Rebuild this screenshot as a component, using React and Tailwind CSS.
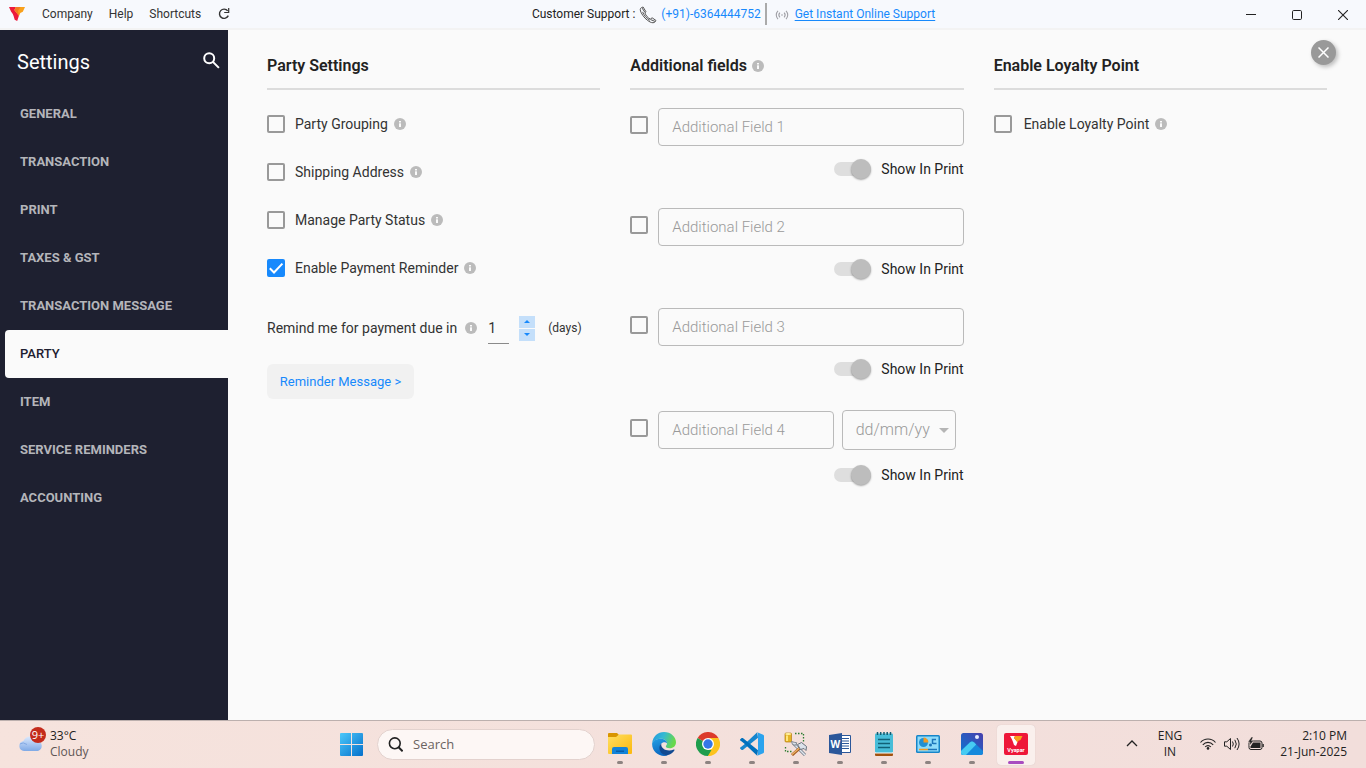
import React from "react";

const menu = ["GENERAL", "TRANSACTION", "PRINT", "TAXES & GST", "TRANSACTION MESSAGE", "PARTY", "ITEM", "SERVICE REMINDERS", "ACCOUNTING"];

const partyOptions = [
  { id: "grouping", label: "Party Grouping" },
  { id: "shipping", label: "Shipping Address" },
  { id: "status", label: "Manage Party Status" },
  { id: "reminder", label: "Enable Payment Reminder", checked: true },
];

function Info() {
  return (
    <svg viewBox="0 0 12 12" className="h-3 w-3 shrink-0" aria-hidden="true">
      <circle cx="6" cy="6" r="6" fill="#bbb" />
      <rect x="5" y="3" width="2" height="1.5" fill="#fafafa" />
      <rect x="5" y="5.3" width="2" height="3.7" fill="#fafafa" />
    </svg>
  );
}

function Check({ id, checked, label }) {
  return (
    <span className="grid shrink-0 place-items-center">
      <input
        id={id}
        type="checkbox"
        defaultChecked={checked}
        aria-label={label}
        className="peer h-[18px] w-[18px] appearance-none rounded-xs border-2 border-[#999] [grid-area:1/1] checked:border-[#1789fc] checked:bg-[#1789fc]"
      />
      <svg viewBox="0 0 18 18" className="pointer-events-none invisible h-[18px] w-[18px] [grid-area:1/1] peer-checked:visible" aria-hidden="true">
        <path d="M2.8 9.3 7 13.5 15.4 4.6" fill="none" stroke="#fff" strokeWidth="2" />
      </svg>
    </span>
  );
}

function ColumnHeader({ children, info }) {
  return (
    <div className="flex h-[60px] items-center gap-[5px] border-b-2 border-[#dcdcdc] pt-[14px]">
      <h2 className="text-base font-semibold text-[#222]">{children}</h2>
      {info && <Info />}
    </div>
  );
}

function ShowInPrint() {
  return (
    <label className="flex h-5 items-center justify-end gap-[10px] text-sm text-[#222]">
      <input
        type="checkbox"
        role="switch"
        defaultChecked
        className="flex h-[14px] w-[37px] appearance-none items-center justify-end rounded-full bg-[#dedede] before:h-5 before:w-5 before:rounded-full before:bg-[#bdbdbd] before:shadow-[0_1px_2px_rgba(0,0,0,0.35)]"
      />
      Show In Print
    </label>
  );
}

function TextField({ n }) {
  return (
    <input
      type="text"
      aria-label={"Additional Field " + n + " name"}
      placeholder={"Additional Field " + n}
      className="h-[38px] w-full min-w-0 flex-1 rounded-sm border border-[#bababa] bg-transparent px-[13px] text-[15px] font-light text-[#333] placeholder:text-[#999]"
    />
  );
}

function AdditionalField({ n }) {
  return (
    <div className="mb-[29px]">
      <div className="flex items-start gap-[10px]">
        <div className="mt-2">
          <Check id={"field-" + n} label={"Enable Additional Field " + n} />
        </div>
        <TextField n={n} />
      </div>
      <div className="mt-[13px]">
        <ShowInPrint />
      </div>
    </div>
  );
}

function Logo() {
  return (
    <svg viewBox="0 0 16 14" className="mr-px h-[14px] w-4" aria-hidden="true">
      <path d="M0 0h7L5.5 3 10 8.5 8.2 14 5.7 12.7 4.6 9 3.8 7 2 4.6Z" fill="#ed1a3b" />
      <path d="M7 0h9l-2.2 4.8-2.5 1.2L10 9 5.5 3Z" fill="#f9a11b" />
      <path d="m7 0 4.5 0L9 4 10 9 5.5 3Z" fill="#f47b20" />
    </svg>
  );
}

function TitleBar() {
  return (
    <header className="flex h-[30px] shrink-0 items-center border-b-2 border-[#f3f3f3] bg-[#f7f9fd] text-xs text-[#333]">
      <nav className="flex grow-[528] basis-0 items-center gap-4 pl-[9px]">
        <Logo />
        <button>Company</button>
        <button>Help</button>
        <button>Shortcuts</button>
        <button aria-label="Refresh" className="ml-px">
          <svg viewBox="0 0 12 12" className="h-3 w-3" aria-hidden="true">
            <path d="M9.7 2.9A4.6 4.6 0 1 0 10.3 7.6" fill="none" stroke="#333" strokeWidth="1.4" />
            <path d="M10.7 0v4.5H6.2" fill="none" stroke="#333" strokeWidth="1.2" />
          </svg>
        </button>
      </nav>
      <div className="flex items-center">
        <span className="text-[#222]">Customer Support :</span>
        <svg viewBox="0 0 18 18" className="mt-[2px] ml-1 h-[18px] w-[18px]" fill="none" stroke="#555" strokeWidth="1" aria-hidden="true">
          <path d="M2.4 1.6C.8 2.4 1 4.4 2.2 6.7c2 3.9 5.1 7.4 8.9 9.3 2.1 1 3.9 1.2 5.4-.5l.4-1.1-3.8-2.6-1.8 1.3c-2.4-1.2-4.4-3.5-5.4-6.1l1-1.3L4.1 1Z" />
          <path d="m3.1 2.1 2.7 4.1M11.6 13.6l4.4 1.8M3.6 5.9c1.5 3.6 3.7 6.2 7.3 8.4" />
        </svg>
        <a href="tel:+916364444752" className="ml-1 text-[#1789fc]">(+91)-6364444752</a>
        <span className="mx-1 h-[22px] w-[2px] bg-[#aaa]" />
        <svg viewBox="0 0 14 12" className="mt-px ml-1 h-3 w-[14px]" fill="none" stroke="#a0a0a6" strokeWidth="1.1" aria-hidden="true">
          <path d="M3 1.8C.7 4.2.7 7.8 3 10.2M11 1.8c2.3 2.4 2.3 6 0 8.4M4.9 3.7c-1.3 1.4-1.3 3.2 0 4.6M9.1 3.7c1.3 1.4 1.3 3.2 0 4.6" />
          <circle cx="7" cy="6" r=".8" fill="#a0a0a6" stroke="none" />
        </svg>
        <a href="#support" className="ml-[6px] text-[#1789fc] underline underline-offset-2">Get Instant Online Support</a>
      </div>
      <div className="flex h-full grow-[435] basis-0 justify-end">
        <button aria-label="Minimize" className="grid w-[46px] place-items-center">
          <svg viewBox="0 0 10 10" className="h-[10px] w-[10px]"><path d="M0 5.5h10" stroke="#222" /></svg>
        </button>
        <button aria-label="Maximize" className="grid w-[46px] place-items-center pt-[2px]">
          <svg viewBox="0 0 10 10" className="h-[10px] w-[10px]"><rect x=".5" y=".5" width="9" height="9" rx="1.2" fill="none" stroke="#222" /></svg>
        </button>
        <button aria-label="Close window" className="grid w-[46px] place-items-center pt-[2px]">
          <svg viewBox="0 0 10 10" className="h-[10px] w-[10px]"><path d="m0 0 10 10M10 0 0 10" stroke="#222" strokeWidth="1.1" /></svg>
        </button>
      </div>
    </header>
  );
}

function Sidebar() {
  return (
    <aside className="w-[228px] shrink-0 bg-[#1e2030]">
      <div className="flex h-[60px] items-center justify-between pt-1 pr-2 pl-[17px]">
        <h1 className="text-xl text-white">Settings</h1>
        <button aria-label="Search settings">
          <svg viewBox="0 0 17 17" className="mb-1 h-[17px] w-[17px]" fill="none" stroke="#fff" strokeWidth="2" aria-hidden="true">
            <circle cx="6.2" cy="6.2" r="5" />
            <path d="m9.9 9.9 6 6" />
          </svg>
        </button>
      </div>
      <nav>
        {menu.map((item) => (
          <a
            key={item}
            href={"#" + item.toLowerCase().replaceAll(" ", "-")}
            className={
              item === "PARTY"
                ? "ml-[5px] flex h-12 items-center rounded-l-sm bg-[#fafafa] pl-[15px] text-[13px] font-medium text-[#1e2030]"
                : "flex h-12 items-center pl-5 text-[13px] font-bold text-[#b4b5ba]"
            }
          >
            {item}
          </a>
        ))}
      </nav>
    </aside>
  );
}

function PartySettings() {
  return (
    <section>
      <ColumnHeader>Party Settings</ColumnHeader>
      <div className="mt-[10px]">
        {partyOptions.map((o) => (
          <div key={o.id} className="flex h-12 items-center gap-[10px]">
            <Check id={o.id} checked={o.checked} />
            <div className="flex items-center gap-[6px]">
              <label htmlFor={o.id} className="text-sm text-[#333]">{o.label}</label>
              <Info />
            </div>
          </div>
        ))}
      </div>
      <div className="flex h-[72px] items-center">
        <label htmlFor="days" className="mr-2 text-sm text-[#333]">Remind me for payment due in</label>
        <Info />
        <input id="days" type="text" inputMode="numeric" defaultValue="1" className="ml-[11px] h-[31px] w-[21px] border-b border-[#8a8a8a] bg-transparent text-sm text-[#333]" />
        <div className="ml-[10px] flex flex-col gap-px">
          <button aria-label="Increase days" className="grid h-3 w-4 place-items-center bg-[#c4dffa]">
            <svg viewBox="0 0 6 3" className="h-[3px] w-[6px]"><path d="M0 3 3 0l3 3Z" fill="#1789fc" /></svg>
          </button>
          <button aria-label="Decrease days" className="grid h-3 w-4 place-items-center bg-[#c4dffa]">
            <svg viewBox="0 0 6 3" className="h-[3px] w-[6px]"><path d="M0 0h6L3 3Z" fill="#1789fc" /></svg>
          </button>
        </div>
        <span className="ml-[13px] text-xs text-[#333]">(days)</span>
      </div>
      <button className="h-[35px] w-[147px] rounded-md bg-[#f1f1f1] text-[13px] text-[#1789fc]">Reminder Message &gt;</button>
    </section>
  );
}

function AdditionalFields() {
  return (
    <section>
      <ColumnHeader info>Additional fields</ColumnHeader>
      <div className="pt-[18px]">
        <AdditionalField n={1} />
        <AdditionalField n={2} />
        <AdditionalField n={3} />
        <div className="flex items-start gap-[10px] pt-[2px] pr-2">
          <div className="mt-[9px]">
            <Check id="field-4" label="Enable Additional Field 4" />
          </div>
          <div className="flex min-w-0 flex-1 items-center gap-2">
            <TextField n={4} />
            <div className="grid w-[114px] items-center">
              <select aria-label="Date format" className="h-10 w-full appearance-none rounded-sm border border-[#bababa] bg-transparent pl-[13px] text-base font-light text-[#999] [grid-area:1/1]">
                <option>dd/mm/yy</option>
              </select>
              <svg viewBox="0 0 10 5" className="pointer-events-none mr-[7px] h-[5px] w-[10px] justify-self-end [grid-area:1/1]" aria-hidden="true">
                <path d="M0 0h10L5 5Z" fill="#b5b5b5" />
              </svg>
            </div>
          </div>
        </div>
        <div className="mt-[15px]">
          <ShowInPrint />
        </div>
      </div>
    </section>
  );
}

function LoyaltyPoint() {
  return (
    <section>
      <ColumnHeader>Enable Loyalty Point</ColumnHeader>
      <div className="mt-[10px] flex h-12 items-center gap-3">
        <Check id="loyalty" />
        <div className="flex items-center gap-[6px]">
          <label htmlFor="loyalty" className="text-sm text-[#333]">Enable Loyalty Point</label>
          <Info />
        </div>
      </div>
    </section>
  );
}

function ExplorerIcon() {
  return (
    <svg viewBox="0 0 24 24" className="h-6 w-6">
      <defs><linearGradient id="fo" x1="0" y1="0" x2="1" y2="1"><stop stopColor="#ffdf62" /><stop offset="1" stopColor="#fbb80d" /></linearGradient></defs>
      <path d="M0 2q0-1 1-1h8l2 2-2 4H0Z" fill="#d99500" />
      <path d="M0 5h8l3-2.500h12q1 0 1 1V21q0 1-1 1H1q-1 0-1-1Z" fill="url(#fo)" />
      <path d="M4 22v-5q0-2 2-2h12q2 0 2 2v5Z" fill="#1383d8" />
      <path d="M8 18.500h8V20H8Z" fill="#0a5da8" />
    </svg>
  );
}

function EdgeIcon() {
  return (
    <svg viewBox="0 0 24 24" className="h-6 w-6">
      <defs>
        <linearGradient id="e1" x1="0" y1="0" x2="1" y2=".3"><stop stopColor="#2197df" /><stop offset=".5" stopColor="#35b9d3" /><stop offset="1" stopColor="#68d84b" /></linearGradient>
        <linearGradient id="e2" x1="0" y1="0" x2=".3" y2="1"><stop stopColor="#23a0e4" /><stop offset="1" stopColor="#0b67c0" /></linearGradient>
      </defs>
      <path d="M.2 11C.8 4.5 5.8 0 12 0c7 0 12 5 12 10.2 0 3.7-2.8 6-6.2 6-2.7 0-4-.9-4-1.7 0-.8 1.2-1.2 1.2-3 0-2.5-2.5-4.7-6.1-4.7-4 0-7 1.7-8.7 4.2Z" fill="url(#e1)" />
      <path d="M.2 11C1.6 8.2 4.9 6.800 8.900 6.800c3.600 0 6.100 2.200 6.100 4.400-2.400-2-7-.5-7 4 0 4.300 3.600 7.900 8 8C9 26-.8 20.500.200 11Z" fill="url(#e2)" />
      <path d="M9.300 11.800C6.500 13.500 7 19 10 21.500c2 1.700 4.800 2.200 7 1.300 2.200-.9 4.200-2.500 5.500-4.600.3-.6-.2-.8-.7-.6-6.300 2.600-13.300-.6-12.500-5.800Z" fill="#124a91" />
    </svg>
  );
}

function ChromeIcon() {
  return (
    <svg viewBox="0 0 24 24" className="h-6 w-6">
      <path d="M12 12 1.600 6A12 12 0 0 1 22.400 6Z" fill="#dc3b2c" />
      <path d="M12 12 22.400 6A12 12 0 0 1 12 24Z" fill="#fcc31e" />
      <path d="M12 12v12A12 12 0 0 1 1.600 6Z" fill="#1f9d4d" />
      <path d="M12 6h10.400l-5.200 9Z" fill="#fcc31e" />
      <path d="m6.800 15 5.200 3h5.200L12 24Z" fill="#1f9d4d" />
      <path d="m17.200 15-5.200 9 2-.2 6-7Z" fill="#fcc31e" />
      <circle cx="12" cy="12" r="6" fill="#fff" />
      <circle cx="12" cy="12" r="4.700" fill="#3577e8" />
    </svg>
  );
}

function CodeIcon() {
  return (
    <svg viewBox="0 0 24 24" className="h-6 w-6">
      <path d="m17.200.2-12.700 12L1.700 14.400.3 15.500q-.6.600 0 1.200l1.400 1.200q.5.400 1.100 0L18 5.800Z" fill="#1686ce" />
      <path d="M17.200 23.800 4.500 11.800 1.700 9.600.3 8.500q-.6-.6 0-1.200l1.400-1.200q.5-.4 1.100 0L18 18.200Z" fill="#0070bd" />
      <path d="m17.200.200 6 2.600q.8.400.8 1.300v15.800q0 .9-.8 1.300l-6 2.600q.8-.6.800-1.500V1.700q0-.9-.8-1.500Z" fill="#2ba3ee" />
    </svg>
  );
}

function ToolsIcon() {
  return (
    <svg viewBox="0 0 24 24" className="h-6 w-6">
      <rect x="1" y="1" width="6.500" height="9" rx="1" fill="#e5b426" stroke="#b47b10" strokeWidth=".7" />
      <path d="M2 3.500h2V9H2Z" fill="#ffe67c" />
      <ellipse cx="4.200" cy="2" rx="3" ry="1.100" fill="#fff0a0" />
      <path d="M11 1.500h8.500V10M1.500 15v4.500H9" fill="none" stroke="#2e7d32" strokeWidth="1.300" strokeDasharray="1.500 1.500" />
      <path d="m10 12 11 11" stroke="#6f7b89" strokeWidth="3" />
      <path d="m10 12 11 11" stroke="#e0e5ec" strokeWidth="1.500" />
      <path d="m8 23 9-8" stroke="#a65d20" strokeWidth="3" />
      <path d="m8 22.500 8-7" stroke="#ecb368" strokeWidth="1.300" />
      <path d="m13.500 12.500 4-2 5 4-.5 4-2-2-3.500 1Z" fill="#dce2ea" stroke="#68717c" />
      <path d="m7.500 9.500 1 3 3 .8 1.300-2.500-2.500-.5Z" fill="#dce2ea" stroke="#68717c" strokeWidth=".8" />
    </svg>
  );
}

function WordIcon() {
  return (
    <svg viewBox="0 0 24 24" className="h-6 w-6">
      <path d="M13 3.500h9.500v17H13Z" fill="#fff" stroke="#2b579a" />
      <path d="M14 6.500h7M14 9h7M14 11.500h7M14 14h7M14 16.500h7" stroke="#2b579a" />
      <path d="M1 3 14 1v22L1 21Z" fill="#2b579a" />
      <text x="7.300" y="15.500" textAnchor="middle" fontSize="10" fontWeight="700" fontFamily="Open Sans, sans-serif" fill="#fff">W</text>
    </svg>
  );
}

function NotepadIcon() {
  return (
    <svg viewBox="0 0 24 24" className="h-6 w-6">
      <rect x="3" y="19" width="18" height="5" rx="1" fill="#a3520f" />
      <rect x="3" y="19" width="18" height="2.500" fill="#fff" />
      <rect x="3" y="1.500" width="18" height="19" rx="1" fill="#48bdd8" />
      <path d="M5.500 0v3M8.700 0v3M12 0v3M15.200 0v3M18.500 0v3" stroke="#125b70" strokeWidth="1.500" />
      <path d="M6 7.500h12M6 11.500h12M6 15.500h12" stroke="#116177" strokeWidth="1.700" />
    </svg>
  );
}

function PanelIcon() {
  return (
    <svg viewBox="0 0 24 24" className="h-6 w-6">
      <rect y="3" width="24" height="18" rx="1.500" fill="#1685c9" />
      <rect x="1.500" y="4.500" width="21" height="15" fill="#8fdcfa" />
      <circle cx="7.500" cy="10.500" r="4.500" fill="#2190d4" />
      <path d="M7.500 10.500V5.500a5 5 0 0 1 5 5Z" fill="#f39a22" />
      <circle cx="14.500" cy="13" r="1.500" fill="#1d75ba" />
      <path d="M16.500 12V7.500h3.500M17 11.500h3.500" fill="none" stroke="#1d75ba" strokeWidth="1.500" />
      <path d="M3 17.500h9" stroke="#f39a22" strokeWidth="1.500" />
      <path d="M12 17.500h9" stroke="#1d75ba" strokeWidth="1.500" />
    </svg>
  );
}

function PhotosIcon() {
  return (
    <svg viewBox="0 0 24 24" className="h-6 w-6">
      <defs>
        <linearGradient id="ph" x1="0" y1="1" x2="1" y2="0"><stop stopColor="#0a78d4" /><stop offset="1" stopColor="#4b3caa" /></linearGradient>
        <clipPath id="pc"><rect x="1" y="1" width="22" height="22" rx="2.500" /></clipPath>
      </defs>
      <g clipPath="url(#pc)">
        <rect width="24" height="24" fill="url(#ph)" />
        <path d="m0 19 9.800-8.500q2.200-1.800 4.400 0L24 20v4H0Z" fill="#1689dc" />
        <path d="M0 23V20l9.800-9.500q2.200-1.800 4.400 0l2 2L5 24Z" fill="#47cbf2" />
      </g>
      <circle cx="17" cy="5" r="2" fill="#e6edff" />
    </svg>
  );
}

function VyaparIcon() {
  return (
    <svg viewBox="0 0 24 24" className="h-6 w-6">
      <rect y="1" width="24" height="22" rx="2" fill="#ee1739" />
      <path d="M6 4h5l-1 2 3.500 4-1.500 4-2-1-1-3-1-2.500Z" fill="#fff" />
      <path d="M11 4h7.500l-2 4-2 .8-1 1.700L10 6Z" fill="#f9a11b" />
      <text x="12" y="19.500" textAnchor="middle" fontSize="5.500" fontWeight="700" fontFamily="Roboto, sans-serif" fill="#fff">Vyapar</text>
    </svg>
  );
}

const apps = [
  ["File Explorer", ExplorerIcon],
  ["Edge", EdgeIcon],
  ["Chrome", ChromeIcon],
  ["Code", CodeIcon],
  ["Tools", ToolsIcon],
  ["Word", WordIcon],
  ["Notepad", NotepadIcon],
  ["Control Panel", PanelIcon],
  ["Photos", PhotosIcon],
];

function Taskbar() {
  return (
    <footer className="flex h-12 shrink-0 items-center border-t border-[#bcb0ae] bg-linear-to-r from-[#f6e3dd] to-[#f2dedb] font-['Open_Sans',sans-serif] text-xs text-[#222]">
      <div className="flex flex-1 items-center pb-[2px] pl-[18px]">
        <svg viewBox="0 0 28 26" className="mb-2 h-[26px] w-7" aria-hidden="true">
          <defs><linearGradient id="cl" x1="0" y1="0" x2="0" y2="1"><stop stopColor="#dbe9fd" /><stop offset="1" stopColor="#7fa9e6" /></linearGradient></defs>
          <path d="M6 24a5 5 0 0 1-.6-9.900A7.500 7.500 0 0 1 19 13.500 5.400 5.400 0 0 1 20 24Z" fill="url(#cl)" />
          <path d="M2 17q3-2.500 7 .5" fill="none" stroke="#84a9e3" />
          <circle cx="20" cy="8" r="8" fill="#c42b1c" />
          <text x="20" y="11.500" textAnchor="middle" fontSize="11" fill="#fff">9+</text>
        </svg>
        <div className="ml-1 leading-4">
          <div>33°C</div>
          <div className="text-[#5e5655]">Cloudy</div>
        </div>
      </div>
      <div className="flex h-full items-center pl-[2px]">
        <button aria-label="Start" className="mr-1 grid w-11 place-items-center pb-px">
          <svg viewBox="0 0 23 23" className="h-[23px] w-[23px]">
            <defs><linearGradient id="wn" x1="0" y1="0" x2="23" y2="23" gradientUnits="userSpaceOnUse"><stop stopColor="#4cc8fa" /><stop offset="1" stopColor="#0570cb" /></linearGradient></defs>
            <path d="M1 0h10v11H0V1q0-1 1-1ZM12 0h10q1 0 1 1v10H12ZM0 12h11v11H1q-1 0-1-1ZM12 12h11v10q0 1-1 1H12Z" fill="url(#wn)" />
          </svg>
        </button>
        <label className="flex h-[31px] w-[218px] items-center gap-[10px] rounded-full border border-[#e3d2ce] bg-[#fdf7f5] pl-[10px]">
          <svg viewBox="0 0 15 15" className="h-[15px] w-[15px]" fill="none" stroke="#222" strokeWidth="1.600" aria-hidden="true">
            <circle cx="6.800" cy="6.300" r="5.400" />
            <path d="m10.600 10.300 4 4" strokeWidth="2" />
          </svg>
          <input type="search" aria-label="Search" placeholder="Search" className="w-0 flex-1 bg-transparent text-[13px] placeholder:text-[#6b6361]" />
        </label>
        <div className="ml-[3px] flex h-full items-center">
          {apps.map(([name, Icon]) => (
            <button key={name} aria-label={name} className="flex h-10 w-11 flex-col items-center justify-between pt-[7px] pb-px">
              <Icon />
              <span className="h-[3px] w-[6px] rounded-full bg-[#8d8381]" />
            </button>
          ))}
          <div className="grid w-11 place-items-center">
            <button aria-label="Vyapar" className="flex h-10 w-[38px] flex-col items-center justify-between rounded-sm bg-[#faf0ed] pt-[7px] pb-px shadow-[0_0_1px_#cbb]">
              <VyaparIcon />
              <span className="h-[3px] w-4 rounded-full bg-[#a94cc0]" />
            </button>
          </div>
        </div>
      </div>
      <div className="flex flex-1 items-center justify-end pr-[19px] pb-[2px]">
        <button aria-label="Hidden icons" className="mr-5">
          <svg viewBox="0 0 12 7" className="h-[7px] w-3" fill="none" stroke="#222" strokeWidth="1.300"><path d="m1 6 5-5 5 5" /></svg>
        </button>
        <div className="mr-[18px] text-center leading-4">
          <div>ENG</div>
          <div>IN</div>
        </div>
        <div className="mr-4 flex items-center gap-2" aria-hidden="true">
          <svg viewBox="0 0 16 12" className="h-3 w-4" fill="none" stroke="#222" strokeWidth="1.100">
            <path d="M.5 4.500C4.500-.2 11.500-.2 15.500 4.500M2.800 6.900c3-3.400 7.400-3.400 10.400 0M5.100 9c1.700-1.900 4.100-1.900 5.800 0" />
            <circle cx="8" cy="10.400" r="1.300" fill="#222" stroke="none" />
          </svg>
          <svg viewBox="0 0 16 14" className="h-[14px] w-4" fill="none" stroke="#222">
            <path d="M.5 4.800h2.300L6.500 1.500v11L2.800 9.200H.5Z" />
            <path d="M8.500 4.500q1.600 2.500 0 5M10.800 2.800q3 4.200 0 8.400M13 1q4.200 6 0 12" />
          </svg>
          <svg viewBox="0 0 16 14" className="h-[14px] w-4">
            <rect x="1" y="4" width="13" height="8.500" rx="2" fill="none" stroke="#222" />
            <path d="M5 5.500h7.500v5.500H2.500V9.500Z" fill="#222" />
            <path d="M14.500 7h1.300v3h-1.300Z" fill="#222" />
            <path d="M3.500 0 0 5h2L1.500 8.500 5.500 3.800h-2L5 0Z" fill="#222" stroke="#f3e0dc" strokeWidth=".4" />
          </svg>
        </div>
        <div className="text-right leading-4">
          <div>2:10 PM</div>
          <div>21-Jun-2025</div>
        </div>
      </div>
    </footer>
  );
}

export default function App() {
  return (
    <div className="flex min-h-screen flex-col bg-[#fafafa] font-[Roboto,sans-serif]">
      <TitleBar />
      <div className="flex flex-1">
        <Sidebar />
        <main className="relative grid flex-1 grid-cols-3 gap-[30px] px-[39px]">
          <PartySettings />
          <AdditionalFields />
          <LoyaltyPoint />
          <button aria-label="Close settings" className="absolute top-[10px] right-[30px] grid h-[25px] w-[25px] place-items-center rounded-full bg-[#999] shadow-[2px_2px_4px_rgba(0,0,0,0.25)]">
            <svg viewBox="0 0 11 11" className="h-[11px] w-[11px]"><path d="m.5.500 10 10M10.500.500l-10 10" stroke="#fff" strokeWidth="1.500" /></svg>
          </button>
        </main>
      </div>
      <Taskbar />
    </div>
  );
}
